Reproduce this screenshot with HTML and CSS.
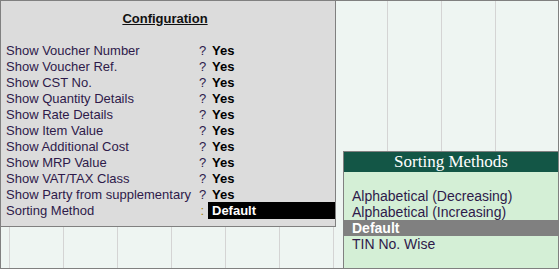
FILE: index.html
```html
<!DOCTYPE html>
<html lang="en">
<head>
  <meta charset="UTF-8">
  <meta name="viewport" content="width=device-width, initial-scale=1.0">
  <title>Configuration</title>
  <link rel="stylesheet" href="styles.css">
</head>
<body>

  <div class="screen">

    <!-- Configuration panel -->
    <div class="config">
      <h2 class="config-title">Configuration</h2>

      <div class="config-rows">
        <div class="row"><span class="label">Show Voucher Number</span><span class="sep">?</span><span class="value">Yes</span></div>
        <div class="row"><span class="label">Show Voucher Ref.</span><span class="sep">?</span><span class="value">Yes</span></div>
        <div class="row"><span class="label">Show CST No.</span><span class="sep">?</span><span class="value">Yes</span></div>
        <div class="row"><span class="label">Show Quantity Details</span><span class="sep">?</span><span class="value">Yes</span></div>
        <div class="row"><span class="label">Show Rate Details</span><span class="sep">?</span><span class="value">Yes</span></div>
        <div class="row"><span class="label">Show Item Value</span><span class="sep">?</span><span class="value">Yes</span></div>
        <div class="row"><span class="label">Show Additional Cost</span><span class="sep">?</span><span class="value">Yes</span></div>
        <div class="row"><span class="label">Show MRP Value</span><span class="sep">?</span><span class="value">Yes</span></div>
        <div class="row"><span class="label">Show VAT/TAX Class</span><span class="sep">?</span><span class="value">Yes</span></div>
        <div class="row"><span class="label">Show Party from supplementary</span><span class="sep">?</span><span class="value">Yes</span></div>
        <div class="row"><span class="label">Sorting Method</span><span class="sep colon">:</span><span class="value selected">Default</span></div>
      </div>
    </div>

    <!-- Sorting methods popup -->
    <div class="popup">
      <div class="popup-title">Sorting Methods</div>
      <ul class="popup-list">
        <li>Alphabetical (Decreasing)</li>
        <li>Alphabetical (Increasing)</li>
        <li class="active">Default</li>
        <li>TIN No. Wise</li>
      </ul>
    </div>

  </div>

</body>
</html>
```

FILE: styles.css
```css
/* ===== General ===== */
body {
  margin: 0;
  font-family: 'Liberation Sans', Arial, sans-serif;
  font-size: 13px;
  color: #2e1a4a;
}

.screen {
  position: relative;
  width: 559px;
  height: 269px;
  box-sizing: border-box;
  border: 1px solid #808080;
  background-color: #eef5f2;
  background-image:
    linear-gradient(to right, transparent 539px, #eef5f2 539px),
    repeating-linear-gradient(to right, transparent 0 8px, #d4d4d4 8px 9px, transparent 9px 54px);
}

/* ===== Configuration panel ===== */
.config {
  width: 335px;
  height: 226px;
  box-sizing: border-box;
  background-color: #dcdcdc;
  border-right: 1px solid #808080;
  border-bottom: 1px solid #808080;
  padding-top: 10px;
}

.config-title {
  margin: 0;
  padding-right: 6px;
  font-size: 13px;
  line-height: 16px;
  font-weight: bold;
  text-align: center;
  color: #111;
  text-decoration: underline;
}

.config-rows {
  margin-top: 16px;
}

.row {
  display: flex;
  height: 16px;
  line-height: 16px;
  padding-left: 5px;
}

.row .label {
  width: 193px;
}

.row .sep {
  width: 9px;
}

.row .colon {
  text-align: right;
  padding-right: 4px;
  width: 5px;
  color: #a08010;
}

.row .value {
  flex: 1;
  padding-left: 4px;
  font-weight: bold;
  color: #000;
}

.row .selected {
  background-color: #000;
  color: #fff;
  margin-top: -1px;
  line-height: 17px;
}

/* ===== Sorting popup ===== */
.popup {
  position: absolute;
  left: 342px;
  top: 150px;
  right: 0;
  bottom: 0;
  border-left: 1px solid #808080;
  border-top: 1px solid #808080;
  background-color: #d4efd6;
}

.popup-title {
  height: 20px;
  line-height: 20px;
  background-color: #135646;
  color: #fff;
  text-align: center;
  font-family: 'Liberation Serif', 'Times New Roman', serif;
  font-size: 17px;
}

.popup-list {
  list-style: none;
  margin: 16px 0 0;
  padding: 0;
  font-size: 14px;
}

.popup-list li {
  height: 16px;
  line-height: 17px;
  padding-left: 8px;
}

.popup-list .active {
  background-color: #808080;
  color: #fff;
  font-weight: bold;
}
```
